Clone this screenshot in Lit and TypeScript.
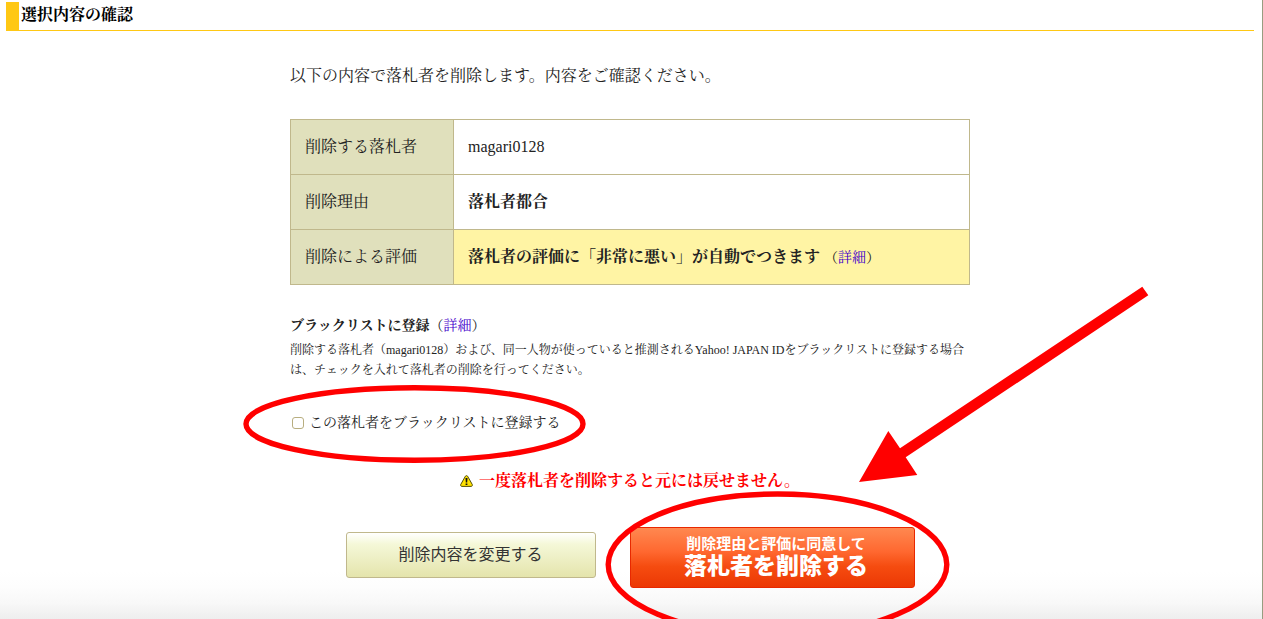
import { LitElement, html, css } from "lit";
import { customElement, state } from "lit/decorators.js";

@customElement("app-root")
export class AppRoot extends LitElement {
  static styles = css`
    :host {
      display: block;
      color: #222;
      font-family: "Liberation Serif", "Noto Serif CJK JP", "Noto Sans CJK JP", serif;
      font-size: 16px;
      line-height: 24px;
    }
    .page {
      box-sizing: border-box;
      min-height: 100vh;
      overflow: clip;
      padding: 2px 8px 31px 6px;
      border-right: 1px solid #979d80;
      background: linear-gradient(to top, #eee, #f8f8f8 16px, #fdfdfd 32px, #fff 48px) no-repeat bottom / 100% 48px #fff;
    }
    .title {
      margin: 0;
      padding: 0 0 3px 2px;
      border-left: 13px solid #ffc814;
      box-shadow: inset 0 -1px #ffc814;
      color: #000;
      font-size: 16px;
      line-height: 26px;
    }
    .main {
      position: relative;
      max-width: 680px;
      margin: 0 auto;
      padding-top: 33px;
    }
    p {
      margin: 0;
    }
    .summary {
      width: 100%;
      margin-top: 31px;
      border-collapse: collapse;
      table-layout: fixed;
    }
    .summary th,
    .summary td {
      box-sizing: border-box;
      height: 55px;
      padding: 0 14px;
      border: 1px solid #c0b88c;
      text-align: left;
    }
    .summary th {
      width: 163px;
      background: #e0e0bc;
      font-weight: normal;
    }
    .summary .notice {
      background: #fff4a4;
    }
    .small {
      font-size: 14px;
      font-weight: normal;
    }
    a {
      color: #4400cc;
      text-decoration: none;
    }
    .subtitle {
      margin: 29px 0 2px;
      font-size: 14px;
    }
    .description {
      font-size: 12px;
      line-height: 20px;
    }
    .choice {
      display: flex;
      align-items: center;
      gap: 5px;
      margin-top: 31px;
      padding-left: 2px;
      font-size: 14px;
    }
    .choice input {
      appearance: none;
      box-sizing: border-box;
      width: 12px;
      height: 12px;
      margin: 0;
      border: 1px solid #b8ae80;
      border-radius: 3px;
      background: #fff;
    }
    .choice input:checked {
      background: #b8ae80;
    }
    .warning {
      display: flex;
      align-items: center;
      justify-content: center;
      gap: 6px;
      margin-top: 34px;
      color: #f00;
      font-weight: bold;
    }
    .actions {
      display: flex;
      align-items: flex-start;
      justify-content: center;
      gap: 34px;
      margin-top: 34px;
    }
    button {
      box-sizing: border-box;
      border-radius: 3px;
      font-family: "Liberation Sans", "Noto Sans CJK JP", sans-serif;
      cursor: pointer;
    }
    .change {
      width: 250px;
      height: 46px;
      margin-top: 5px;
      padding: 0 0 4px;
      border: 1px solid #c0b88c;
      background: linear-gradient(#fff, #f5f8d8 25%, #e4e4ac);
      color: #333;
      font-size: 16px;
    }
    .delete {
      width: 285px;
      height: 61px;
      padding: 0 0 2px 8px;
      border: 1px solid #e82800;
      background: linear-gradient(#ff8850, #ff6830 40%, #f54c10 65%, #ec3804);
      color: #fff;
      font-size: 15px;
      font-weight: bold;
      line-height: 18px;
    }
    .delete strong {
      display: block;
      font-size: 23px;
      line-height: 26px;
    }
    .marks {
      position: absolute;
      top: 249px;
      left: -50px;
      pointer-events: none;
      overflow: visible;
    }
  `;

  @state() private blacklist = false;

  render() {
    return html`
      <div class="page">
        <h1 class="title">選択内容の確認</h1>
        <main class="main">
          <p>以下の内容で落札者を削除します。内容をご確認ください。</p>
          <table class="summary">
            <tbody>
              <tr><th scope="row">削除する落札者</th><td>magari0128</td></tr>
              <tr><th scope="row">削除理由</th><td><strong>落札者都合</strong></td></tr>
              <tr>
                <th scope="row">削除による評価</th>
                <td class="notice"><strong>落札者の評価に「非常に悪い」が自動でつきます</strong> <span class="small">（<a href="#rating">詳細</a>）</span></td>
              </tr>
            </tbody>
          </table>
          <h2 class="subtitle">ブラックリストに登録<span class="small">（<a href="#blacklist">詳細</a>）</span></h2>
          <p class="description">削除する落札者（magari0128）および、同一人物が使っていると推測されるYahoo! JAPAN IDをブラックリストに登録する場合は、チェックを入れて落札者の削除を行ってください。</p>
          <div class="choice">
            <input
              id="blacklist"
              type="checkbox"
              .checked=${this.blacklist}
              @change=${(e: Event) => (this.blacklist = (e.target as HTMLInputElement).checked)}
            />
            <label for="blacklist">この落札者をブラックリストに登録する</label>
          </div>
          <p class="warning">
            <svg width="13" height="12" viewBox="0 0 13 12" aria-hidden="true">
              <path d="M5.4 1.2Q6.5 0 7.6 1.2L12.3 9.6Q12.6 11.2 11.4 11.4H1.6Q.4 11.2 .7 9.6Z" fill="#ffe100" stroke="#55500c" />
              <path d="M5.5 3h2L7.2 7.4H5.8ZM5.6 8.4h1.8V10H5.6Z" fill="#111" />
            </svg>
            <span>一度落札者を削除すると元には戻せません。</span>
          </p>
          <div class="actions">
            <button class="change" type="button">削除内容を変更する</button>
            <button class="delete" type="submit">削除理由と評価に同意して<strong>落札者を削除する</strong></button>
          </div>
          <svg class="marks" width="920" height="360" viewBox="240 280 920 360" aria-hidden="true">
            <g fill="none" stroke="#f00" stroke-width="5.4">
              <ellipse cx="414.5" cy="424" rx="168.5" ry="36.2" />
              <ellipse cx="777.5" cy="564.5" rx="169.3" ry="70.5" />
            </g>
            <path fill="#f00" d="M1142.3 286.7L1148.3 295.3L905.7 457.3L917.3 475L859 482L888.3 431L900 448.3Z" />
          </svg>
        </main>
      </div>
    `;
  }
}
